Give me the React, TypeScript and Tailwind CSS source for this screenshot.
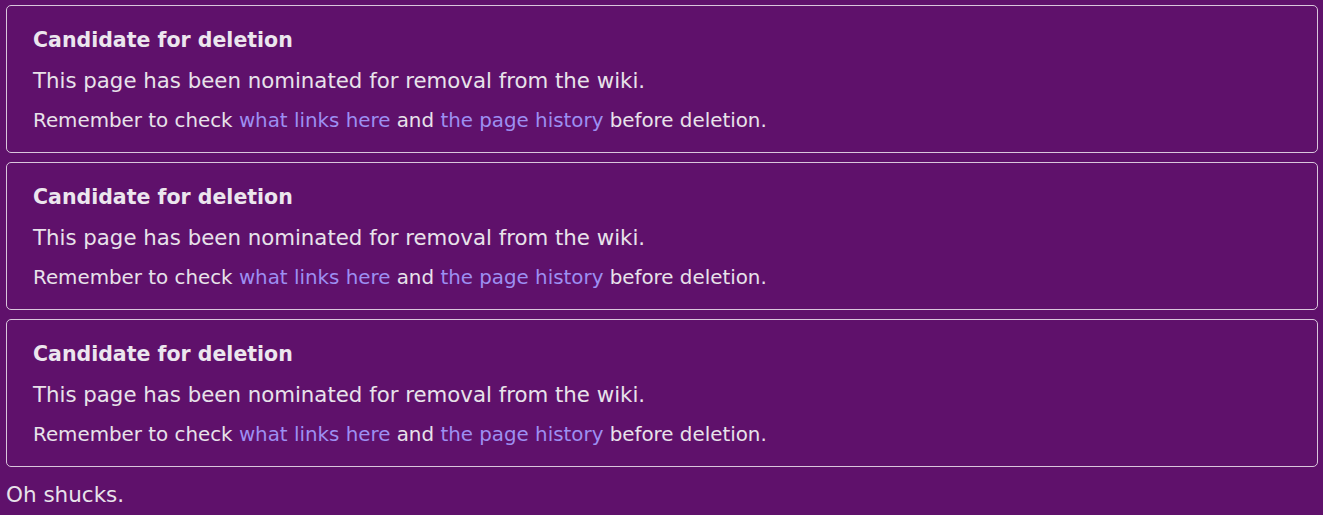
const boxes = [0, 1, 2];

function DeletionNotice() {
  return (
    <div className="ml-[6px] mr-[5px] mb-[9px] rounded-[5px] border border-[#d9c6dc] pl-[26px] pr-6 pt-[19px] pb-[16px]">
      <p className="text-[20.5px] leading-[30px] font-bold text-[#ece6ee]">Candidate for deletion</p>
      <p className="mt-[11px] text-[21.3px] leading-[30px] text-[#e8e2ea]">
        This page has been nominated for removal from the wiki.
      </p>
      <p className="mt-[10px] text-[19.85px] leading-[30px] text-[#e8e2ea]">
        Remember to check <a className="text-[#9d8ff2]">what links here</a> and{" "}
        <a className="text-[#9d8ff2]">the page history</a> before deletion.
      </p>
    </div>
  );
}

export default function App() {
  return (
    <div className="min-h-[515px] bg-[#5f116b] pt-[5px] font-['DejaVu_Sans',sans-serif]">
      {boxes.map((b) => (
        <DeletionNotice key={b} />
      ))}
      <p className="mt-[13px] px-[6px] text-[21.5px] leading-[30px] text-[#e8e2ea]">Oh shucks.</p>
    </div>
  );
}
